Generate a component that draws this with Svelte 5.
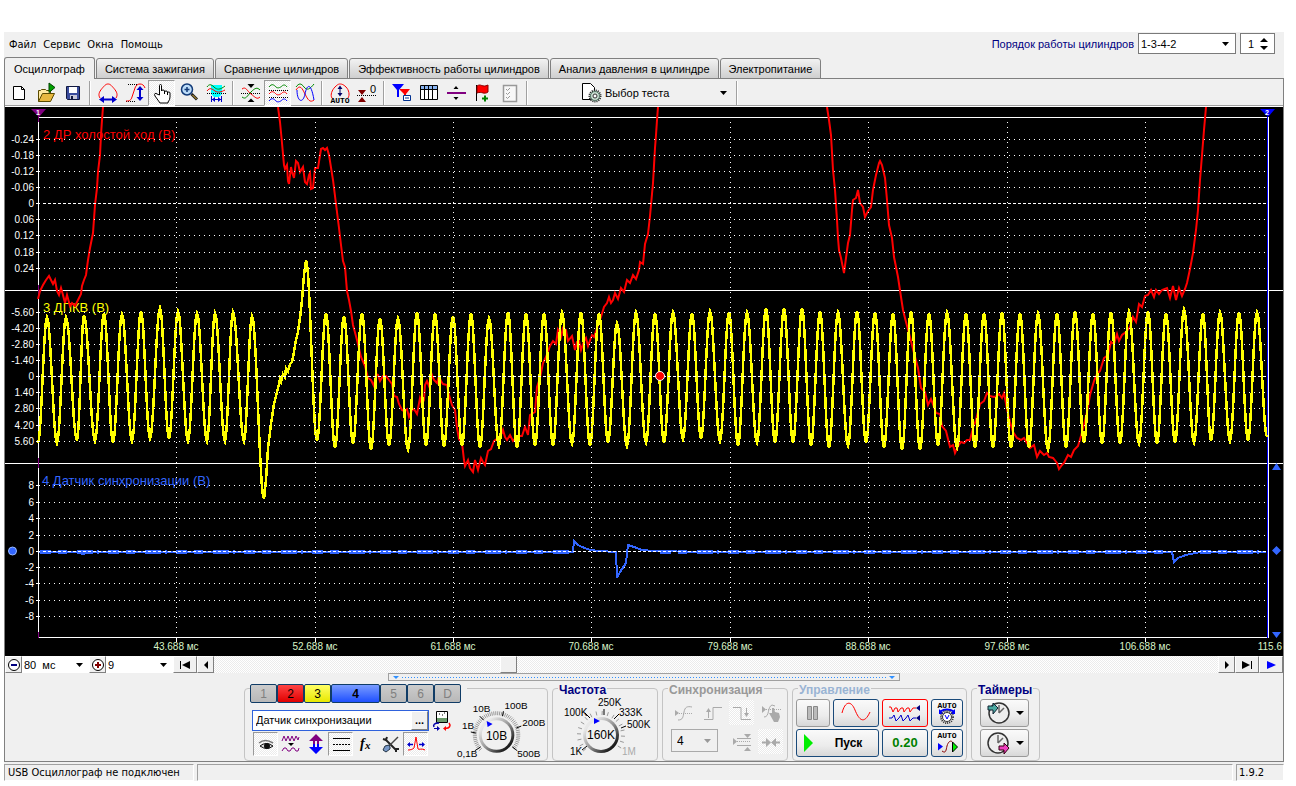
<script lang="ts">
  type Point = [number, number];

  const menu = ['Файл', 'Сервис', 'Окна', 'Помощь'];
  const tabs = [
    'Осциллограф',
    'Система зажигания',
    'Сравнение цилиндров',
    'Эффективность работы цилиндров',
    'Анализ давления в цилиндре',
    'Электропитание'
  ];
  let activeTab = $state(0);

  const toolbar = [
    ['new', 'open', 'save'],
    ['period', 'amplitude', 'hand', 'zoom', 'range'],
    ['overlay', 'stack', 'mixed'],
    ['auto', 'zero'],
    ['markers', 'table', 'divider', 'flag', 'checklist']
  ];
  const pressed = ['hand', 'stack', 'eye', 'lines', 'spread', 'fall', 'join'];

  const channels = [
    { name: '1', color: 'off' },
    { name: '2', color: 'red' },
    { name: '3', color: 'yellow' },
    { name: '4', color: 'blue' },
    { name: '5', color: 'off' },
    { name: '6', color: 'off' },
    { name: 'D', color: 'off' }
  ];
  const channelTools = ['eye', 'noise', 'updown', 'lines', 'fx', 'tools', 'spread'];

  // y positions of the grid rows, one block per channel
  const panels = [
    {
      ys: [139, 155, 171, 187, 203, 219, 235, 252, 268],
      labels: ['-0.24', '-0.18', '-0.12', '-0.06', '0', '0.06', '0.12', '0.18', '0.24']
    },
    {
      ys: [312, 328, 344, 360, 376, 392, 408, 425, 441],
      labels: ['-5.60', '-4.20', '-2.80', '-1.40', '0', '1.40', '2.80', '4.20', '5.60']
    },
    {
      ys: [485, 502, 518, 535, 551, 567, 583, 600, 616],
      labels: ['8', '6', '4', '2', '0', '-2', '-4', '-6', '-8']
    }
  ];
  const columns = [176, 315, 453, 591, 730, 868, 1007, 1145];
  const times = ['43.688', '52.688', '61.688', '70.688', '79.688', '88.688', '97.688', '106.688'];

  const throttle = [
    '38,299 40,291 43,285 46,280 49,276 51,280 53,284 55,280 57,291 59,295 61,288 63,295 65,303 67,295 70,306 72,303 75,306 78,300 81,294 82,286 84,280 86,275 88,260 90,248 93,233 95,205 97,188 98,172 100,155 101,135 102,120 103,107',
    '278,107 280,122 282,143 284,165 285,169 287,165 288,181 289,184 291,167 292,172 294,178 296,161 298,163 300,172 303,167 305,182 307,184 309,175 310,173 311,189 313,188 314,178 315,168 318,168 321,149 323,148 325,150 327,148 329,155 333,180 336,204 339,228 341,245 343,261 345,267 347,291 349,300 351,311 353,325 357,340 361,357 365,366 368,378 371,380 374,386 376,374 378,375 380,381 383,376 386,376 389,380 392,384 394,396 397,397 399,404 402,410 404,411 407,409 409,417 412,410 414,409 417,414 420,398 422,404 424,400 425,385 427,381 429,386 432,375 434,380 437,383 439,376 441,381 443,384 447,385 449,395 452,405 455,410 457,428 459,439 462,443 464,460 465,466 468,460 470,468 473,472 475,460 478,470 481,458 483,462 485,465 488,451 491,449 494,441 498,438 502,433 503,430 505,437 507,440 510,435 513,441 517,436 522,436 525,427 528,435 530,415 535,412 537,387 540,378 543,363 546,357 550,346 553,341 556,344 558,330 561,337 563,328 566,330 568,341 572,336 575,350 577,342 579,341 581,350 584,341 586,338 588,346 592,335 594,337 598,325 601,317 604,307 607,303 609,297 611,303 613,300 615,293 618,299 621,288 624,292 627,280 630,283 633,275 636,279 639,270 640,262 643,264 645,244 648,234 650,216 652,194 653,183 655,148 656,135 657,120 658,107',
    '827,107 829,120 831,135 833,170 835,190 837,220 838,238 839,250 841,258 844,273 846,258 848,243 850,235 852,210 853,200 856,198 858,190 860,203 863,207 865,217 868,211 871,207 873,190 876,175 879,163 880,161 882,165 885,178 887,200 889,225 892,238 894,257 898,277 901,297 903,310 906,322 910,337 914,353 918,368 921,388 925,392 928,405 931,399 934,407 936,413 940,414 942,426 946,431 950,447 953,445 955,453 958,446 961,442 964,443 967,440 970,440 973,428 976,420 980,404 984,401 987,393 990,396 994,397 997,396 999,394 1002,398 1004,393 1007,409 1010,422 1013,432 1017,438 1021,440 1024,438 1027,443 1030,448 1034,445 1037,457 1040,451 1044,455 1047,453 1049,457 1053,458 1057,463 1059,469 1062,465 1064,463 1068,455 1071,457 1074,450 1078,446 1081,436 1084,425 1087,412 1090,395 1094,381 1097,374 1100,371 1104,358 1108,355 1111,342 1114,344 1117,334 1119,341 1122,335 1126,332 1130,327 1133,317 1136,322 1139,304 1142,307 1145,296 1148,295 1151,290 1154,297 1156,290 1159,294 1162,290 1167,288 1170,298 1173,286 1176,300 1179,288 1182,296 1185,289 1187,283 1190,269 1193,253 1196,230 1198,210 1200,180 1202,155 1204,130 1206,107'
  ];

  // turning points of the crankshaft signal, before and after the missing tooth
  const crankStart: Point[] = [
    [38, 443], [47, 317], [57, 443], [66, 317], [77, 441], [84, 315], [95, 441], [104, 313],
    [113, 443], [122, 314], [132, 441], [141, 311], [150, 439], [160, 308], [169, 439], [178, 311],
    [188, 441], [197, 313], [207, 441], [215, 313], [225, 441], [233, 312], [244, 441], [252, 316],
    [264, 499]
  ];
  const crankGap: Point[] = [
    [264, 499], [266, 480], [268, 448], [271, 424], [274, 404], [277, 392], [279, 384], [280, 379],
    [281, 382], [283, 374], [285, 377], [286, 368], [288, 371], [290, 364], [292, 362], [294, 352],
    [296, 340], [298, 332], [300, 318], [302, 300], [304, 275], [306, 260]
  ];
  const peaks: Point[] = [
    [326, 313], [344, 316], [362, 313], [380, 318], [398, 318], [417, 312], [435, 313], [453, 316],
    [471, 313], [489, 318], [508, 312], [526, 313], [544, 313], [562, 312], [581, 312], [599, 313],
    [617, 323], [636, 312], [655, 313], [673, 312], [692, 313], [710, 311], [729, 312], [747, 312],
    [766, 308], [784, 308], [802, 308], [820, 311], [838, 312], [857, 311], [875, 312], [893, 313],
    [911, 311], [929, 313], [947, 312], [966, 313], [984, 313], [1002, 312], [1020, 313],
    [1038, 313], [1057, 313], [1075, 311], [1093, 313], [1111, 312], [1129, 311], [1148, 311],
    [1166, 313], [1184, 309], [1203, 313], [1220, 312], [1239, 312], [1257, 312]
  ];
  const troughs = [
    441, 448, 444, 450, 446, 450, 446, 447, 446, 448, 446, 448, 446, 446, 444, 446, 443, 446, 443,
    443, 439, 439, 441, 446, 443, 443, 443, 446, 448, 446, 443, 448, 450, 450, 446, 448, 448, 448,
    448, 448, 450, 448, 443, 444, 444, 444, 444, 443, 443, 441, 441, 441
  ];

  const crankEnd: Point[] = [[306, 260]];
  peaks.forEach((p, i) => {
    crankEnd.push([p[0] - 9, troughs[i]], p);
  });
  crankEnd.push([1267, 437]);

  // half a cosine between every two turning points
  const wave = (pts: Point[]) => {
    const out: string[] = [];
    for (let i = 1; i < pts.length; i++) {
      const [x0, y0] = pts[i - 1];
      const [x1, y1] = pts[i];
      for (let x = x0; x <= x1; x++) {
        const k = (1 - Math.cos((Math.PI * (x - x0)) / (x1 - x0))) / 2;
        out.push(`${x},${Math.round(y0 + (y1 - y0) * k)}`);
      }
    }
    return out.join(' ');
  };
  const crank = [wave(crankStart), crankGap.join(' '), wave(crankEnd)].join(' ');

  const sync =
    '39,552 80,552 82,554 88,553 92,552 573,552 574,541 578,545 582,547 590,550 600,551 616,552 617,578 620,572 626,563 628,545 634,547 642,550 654,551 700,552 1172,552 1174,562 1178,558 1186,555 1200,552 1266,552';

  // ticks around a knob, angles in degrees clockwise from the top
  const ticks = (cx: number, cy: number, r0: number, r1: number, step: number) => {
    let d = '';
    for (let a = -132; a <= 132; a += step) {
      const s = Math.sin((a * Math.PI) / 180);
      const c = Math.cos((a * Math.PI) / 180);
      d += `M${cx + r0 * s} ${cy - r0 * c}L${cx + r1 * s} ${cy - r1 * c}`;
    }
    return d;
  };

  const auto = (x: number, y: number) =>
    `<text x="${x}" y="${y}" font-family="Liberation Mono, monospace" font-size="8" font-weight="bold" text-anchor="middle">AUTO</text>`;

  const icons: Record<string, string> = {
    new: '<path d="M6.500 5.500h8l3 3v10h-11z" fill="#fff" stroke="#000"/><path d="M14.500 5.500v3h3" fill="none" stroke="#000"/>',
    open: '<path d="M4.500 20.500v-11h2l1-1h4l1 1h4v3" fill="#ffe9a0" stroke="#5a4a00"/><path d="M4.500 20.500l4-8h12l-4 8z" fill="#e8b840" stroke="#5a4a00"/><path d="M15 2l6 4.500-6 5z" fill="#00a000" stroke="#004000"/>',
    save: '<path d="M5.500 5.500h13v13h-12l-1-1z" fill="#3a4c9c" stroke="#101840"/><path d="M8 6h8v6H8z" fill="#fff"/><path d="M9 14h7v4H9z" fill="#c8c8d8"/><path d="M10 15h2v3h-2z" fill="#101840"/>',
    period: '<path d="M4 17c-2-3-1-6 2-9.500s4-4.500 6-4.500 3 1 6 4.500 4 6.500 2 9.500" fill="none" stroke="#f00"/><path d="M6 18.500h12" stroke="#00c" stroke-width="2"/><path d="M8 15v7l-5-3.500zM16 15v7l5-3.500z" fill="#00c"/>',
    amplitude: '<path d="M5 3.500h10M3 20.500h10" stroke="#000" stroke-dasharray="1 1"/><path d="M3 20c4 0 5-1 6-4l3-9c1-3 3-4 5-4s4 1 5 4" fill="none" stroke="#f00"/><path d="M17 7v11" stroke="#00c" stroke-width="2"/><path d="M13.500 9h7L17 5zM13.500 16h7L17 20z" fill="#00c"/>',
    hand: '<path d="M9.500 14V4.500q0-1 1-1t1 1V10q0-1 1.500-1t1.500 1v1q0-1 1.500-1t1.500 1v1q0-1 1.200-1t1.300 1v4q0 3-2 5v1h-8l-5-7q-1-2 0-2.500t2 .5z" fill="#fff" stroke="#000"/><path d="M14.500 11v2M17.500 12v2" stroke="#000"/>',
    zoom: '<circle cx="10" cy="8.500" r="5.500" fill="#bcdcf8" stroke="#123a78" stroke-width="1.500"/><path d="M7.500 8.500h5M10 6v5" stroke="#123a78" stroke-width="1.500"/><path d="M14.500 13l5.500 5.500" stroke="#222" stroke-width="3"/><path d="M15.500 14l4 4" stroke="#e8b830"/>',
    range: '<path d="M7 4h11v9l-3 3h-5l-3-3z" fill="#0ff"/><path d="M3 10c3-4 5-2 8 0s6 1 10-1" fill="none" stroke="#f00"/><path d="M3 6c2-3 4-3 7 0s6 3 11-1" fill="none" stroke="#080"/><path d="M3 12.500h19" stroke="#000" stroke-dasharray="1 1"/><path d="M7.500 15v6M17.500 15v6M8 18.500h9" stroke="#00c"/><path d="M11 16v5l-3-2.500zM14 16v5l3-2.500z" fill="#00c"/>',
    overlay: '<path d="M2 12.500h20" stroke="#000" stroke-dasharray="1 1"/><path d="M3 8c4-3 5 2 9 5s6 6 9 3" fill="none" stroke="#f00"/><path d="M3 16c4 3 5-1 9-5s6-5 9-2" fill="none" stroke="#080"/><path d="M8.500 3h7l-3.500 4zM8.500 21h7L12 17.500z"/>',
    stack: '<path d="M3 6c3-4 5-2 7 0s5 0 6-1 3-2 5 1" fill="none" stroke="#080"/><path d="M3 13c3-4 5-2 7 0s5 0 6-1 3-2 5 1" fill="none" stroke="#f00"/><path d="M3 20c3-4 5-2 7 0s5 0 6-1 3-2 5 1" fill="none" stroke="#00f"/><path d="M3 9.500h19M3 16.500h19" stroke="#000" stroke-dasharray="1 1"/>',
    mixed: '<path d="M3 6c3-4 5-4 8 0s6 2 10-3" fill="none" stroke="#080"/><path d="M3 9c4-6 6-2 9 4s5 9 9 6" fill="none" stroke="#f00"/><path d="M4 9c0 12 6 14 8 4s6-12 9 6" fill="none" stroke="#00f"/>',
    auto: '<path d="M4 17c-2-3 0-8 3-11s4-3 5-3 3 0 6 3 4 8 2 11" fill="none" stroke="#f00"/><path d="M12 6v8" stroke="#006"/><path d="M9.500 8h5L12 4.500zM9.500 12h5L12 15.500z" fill="#006"/>' + auto(12, 22),
    zero: '<path d="M3 9h8l-4 5zM3 21h8l-4-5z" fill="#800000"/><path d="M2 14.500h19" stroke="#000" stroke-dasharray="1 1"/><text x="18" y="12" font-family="Liberation Sans, sans-serif" font-size="11" text-anchor="middle">0</text>',
    markers: '<path d="M2 3h12L9 9v7H7V9z" fill="#00f"/><path d="M10 8h10l-4 5v3h-2v-3l-4-4z" fill="#f00"/><path d="M13.500 14.500h7v5h-7z" fill="#fff" stroke="#003090"/><path d="M15 17h4" stroke="#003090"/>',
    table: '<path d="M3.500 4.500h17v14h-17z" fill="#fff" stroke="#000"/><path d="M4 5h16v3H4z" fill="#8ab4f0"/><path d="M3 8.500h18M7.500 5v14M11.500 5v14M15.500 5v14" stroke="#000"/>',
    divider: '<path d="M3 12h19" stroke="#800080" stroke-width="2"/><path d="M9.500 8h5L12 5zM9.500 16h5L12 19z"/>',
    flag: '<path d="M5.500 4v16" stroke="#000"/><path d="M6 5c4-3 5 2 11-1v7c-4 3-6-1-11 1z" fill="#f00" stroke="#800"/><path d="M11 17.500h6M14 14.500v6" stroke="#008000" stroke-width="2"/>',
    checklist: '<path d="M5.500 4.500h13v16h-13z" fill="#f8f8f8" stroke="#999" stroke-width="1.500"/><path d="M8 8l1.500 1.500L12 7M8 12l1.500 1.500L12 11M8 16l1.500 1.500L12 15" fill="none" stroke="#999"/>',
    test: '<path d="M2.500 2.500h8l4 4v12h-12z" fill="#fff" stroke="#000"/><circle cx="15" cy="15" r="5.500" fill="#c8dccf" stroke="#222" stroke-width="2" stroke-dasharray="1 1"/><circle cx="15" cy="15" r="4.500" fill="#c8dccf" stroke="#576"/><circle cx="15" cy="15" r="2" fill="#fff" stroke="#333"/>',
    eye: '<path d="M5 11q6-5 14 0" fill="none" stroke="#777" stroke-width="1.500"/><path d="M6 14q6-5 13 0-6 5-13 0z" fill="#ddd" stroke="#111"/><circle cx="13" cy="14" r="3" fill="#111"/>',
    noise: '<path d="M3 9l2-5 2 5 2-5 2 5 2-5 2 5 2-5 2 4 1-3M3 19l2-3h2l2 3h2l2-3h2l2 3h2l1-3" fill="none" stroke="#800080"/><path d="M9 11h6l-3 3z"/>',
    updown: '<path d="M12 2l7 7h-4v3H9V9H5z" fill="#800080"/><path d="M9 12h6v3h4l-7 7-7-7h4z" fill="#00f"/><path d="M11 9h2v6h-2z" fill="#f0f0f0"/>',
    lines: '<path d="M4 6.500h17M4 18.500h17" stroke="#000"/><path d="M4 12.500h17" stroke="#000" stroke-dasharray="2 1"/>',
    fx: '<text x="6" y="16" font-family="Liberation Serif, serif" font-size="14" font-style="italic" font-weight="bold">f</text><text x="11" y="17" font-family="Liberation Serif, serif" font-size="11" font-style="italic" font-weight="bold">x</text>',
    tools: '<path d="M6 7l11 11" stroke="#222" stroke-width="2"/><path d="M19 5l-9 9" stroke="#444" stroke-width="1.500"/><path d="M4 7l3 1 1-3M17 20l0-3 3 0" fill="none" stroke="#222" stroke-width="2"/><path d="M10 13l-4 1-2 4 3 2 4-3 0-2z" fill="#7898c8" stroke="#234"/>',
    spread: '<path d="M4 18c3 0 5-1 6-2l2-11 2 12c1 1 4-1 7 1" fill="none" stroke="#f00"/><path d="M4 12.500h5M15 12.500h5" stroke="#00c" stroke-width="1.500"/><path d="M6 10v5l-3-2.500zM18 10v5l3-2.500z" fill="#00c"/>',
    swap: '<path d="M6.500 3.500h11v11h-11z" fill="#fff" stroke="#000"/><path d="M7 10h10v4H7z" fill="#6a9a6a"/><path d="M9 6h1M12 7h1M14 5h1" stroke="#000"/><path d="M9 15c-5 0-6 2-5 4" fill="none" stroke="#00a" stroke-width="1.500"/><path d="M4 20.500h4" stroke="#00a"/><path d="M7 18l3 2.500-3 2.500z" fill="#00a"/><path d="M15 20.500c5 0 6-3 4-5.500" fill="none" stroke="#f00" stroke-width="1.500"/><path d="M16 18l-3 2.500 3 2.500z" fill="#f00"/>',
    curve: '<path d="M3 9v6l4-3z" fill="#aaa"/><path d="M5 12.500h16" stroke="#aaa" stroke-dasharray="1 1"/><path d="M6 19c5 0 5-3 6-8s3-6 8-5" fill="none" stroke="#aaa"/>',
    rise: '<path d="M3 18.500h9v-12h9" fill="none" stroke="#aaa"/><path d="M7.500 17V8" stroke="#aaa"/><path d="M5 11h5l-2.500-4z" fill="#aaa"/>',
    fall: '<path d="M3 6.500h8v12h10" fill="none" stroke="#aaa"/><path d="M16.500 7v8" stroke="#aaa"/><path d="M14 12h5l-2.500 4z" fill="#aaa"/>',
    pick: '<path d="M3 5v7l4-3.500z" fill="#aaa"/><path d="M5 8.500h17" stroke="#aaa" stroke-dasharray="1 1"/><path d="M5 16c6 0 3-10 8-12l3 1" fill="none" stroke="#aaa"/><path d="M10 12l3 0 0-5 2 0 1 4 4 1 1 4-2 5h-4z" fill="#aaa"/>',
    level: '<path d="M3 8v7l4-3.500zM14 4h7l-3.500 4zM14 21h7L17.500 17z" fill="#aaa"/><path d="M7 8.500h14M7 15.500h14" stroke="#aaa"/><path d="M7 11.500h14" stroke="#aaa" stroke-dasharray="1 1"/>',
    join: '<path d="M3 12.500h6M15 12.500h6" stroke="#aaa" stroke-width="2"/><path d="M7 8v9l5-4.500zM17 8v9l-5-4.500z" fill="#aaa"/>',
    first: '<path d="M7 8h1v8H7zM17 8v8l-8-4z"/>',
    prev: '<path d="M14 8v8l-4-4z"/>',
    next: '<path d="M10 8v8l4-4z"/>',
    last: '<path d="M16 8h1v8h-1zM7 8v8l8-4z"/>',
    play: '<path d="M8 8v8l9-4z" fill="#00f"/>',
    minus: '<circle cx="12" cy="12" r="5.500" fill="#fff" stroke="#000"/><path d="M9 12h6" stroke="#000080" stroke-width="2"/>',
    plus: '<circle cx="12" cy="12" r="5.500" fill="#fff" stroke="#000"/><path d="M9 12h6M12 9v6" stroke="#800000" stroke-width="2"/>',
    pause: '<path d="M6.500 5.500h4v13h-4zM12.500 5.500h4v13h-4z" fill="#bbb" stroke="#888"/>',
    sine: '<path d="M-2 12C1 0 7-1 11 9s9 15 15 2" fill="none" stroke="#f00"/>',
    waves: '<path d="M-4 6h2l2 5 2-4h2l1 4 3-4h2l1 4 3-4h2l1 4 3-4h3" fill="none" stroke="#f00"/><path d="M-4 17h3l2-3 2 6 3-3 2-3 2 6 3-3 2-3 2 6 3-3h3" fill="none" stroke="#00c"/><path d="M27 4v6l-4-3zM27 14v6l-4-3z" fill="#000080"/>',
    autoVolt: auto(12, 7) + '<path d="M5 10.500q7-4 14 0" fill="none" stroke="#00f" stroke-width="2"/><path d="M4 8v5h5zM20 8v5h-5z" fill="#00f"/><circle cx="12" cy="16" r="6" fill="none" stroke="#333" stroke-width="2" stroke-dasharray="1 1"/><circle cx="12" cy="16" r="4.500" fill="#fff" stroke="#333"/><path d="M10 14l2 4 2-4" fill="none" stroke="#00f"/>',
    autoRun: auto(12, 7) + '<path d="M3 12l5 3.500-5 4z" fill="#00f"/><path d="M7 20c4 3 4-1 5-5s4-7 6-3" fill="none" stroke="#800"/><path d="M17.500 11l5 5-5 5z" fill="#0e0" stroke="#000"/>',
    clockIn: '<circle cx="13" cy="12" r="10" fill="#eee" stroke="#333" stroke-width="1.500"/><path d="M13 12V4M13 12l5-5" stroke="#666" stroke-width="1.500"/><path d="M2 5h5V2l5 5-5 6v-4H2z" fill="#4aa8a0" stroke="#123"/>',
    clockOut: '<circle cx="12" cy="12" r="10" fill="#eee" stroke="#333" stroke-width="1.500"/><path d="M12 12V4M12 12l5-5" stroke="#666" stroke-width="1.500"/><path d="M13 15h5v-3l5 5-5 6v-4h-5z" fill="#f040c0" stroke="#301"/>',
    run: '<path d="M7 3v18l9-9z" fill="#0e0"/>'
  };

  let channelName = $state('Датчик синхронизации');
  let cylinder = $state(1);
</script>

{#snippet icon(name: string)}
  <svg class="icon" width="24" height="24" viewBox="0 0 24 24" aria-hidden="true">
    {@html icons[name]}
  </svg>
{/snippet}

{#snippet tool(name: string)}
  <button class="tool" class:pressed={pressed.includes(name)} aria-label={name}>
    {@render icon(name)}
  </button>
{/snippet}

<main>
  <header>
    <nav>
      {#each menu as item}
        <button class="menu-item">{item}</button>
      {/each}
    </nav>
    <div class="order">
      <label for="order">Порядок работы цилиндров</label>
      <select id="order" class="boxed">
        <option>1-3-4-2</option>
      </select>
      <div class="spin">
        <input aria-label="Цилиндр" bind:value={cylinder} />
        <div class="spin-buttons">
          <button class="up" aria-label="Больше" onclick={() => (cylinder += 1)}></button>
          <button class="down" aria-label="Меньше" onclick={() => (cylinder -= 1)}></button>
        </div>
      </div>
    </div>
  </header>

  <div class="tabs" role="tablist">
    {#each tabs as tab, i}
      <button
        class="tab"
        class:active={activeTab === i}
        role="tab"
        aria-selected={activeTab === i}
        onclick={() => (activeTab = i)}>{tab}</button
      >
    {/each}
  </div>

  <div class="frame">
    <div class="toolbar">
      {#each toolbar as group}
        {#each group as name}
          {@render tool(name)}
        {/each}
        <span class="sep"></span>
      {/each}
      <div class="test">
        {@render icon('test')}
        <select aria-label="Тест">
          <option>Выбор теста</option>
        </select>
      </div>
      <span class="sep"></span>
    </div>

    <svg class="scope" viewBox="5 107 1278 549" role="img" aria-label="Осциллограмма">
      <g class="crisp">
        <path d="M39 117.500H1268M5 290.500H1283M5 463.500H1283M39 637.500H1268" stroke="#fff" />
        <path d="M38.500 117V638M1268.500 117V638" stroke="#fff" />
        <path d="M1267.500 117V638" stroke="#00f" />
        <path d="M38.500 114V122M38.500 285V296M38.500 458V468M38.500 632V638" stroke="#800080" />
      </g>

      <g class="name">
        <text x="43" y="139" fill="#f00">2 ДР холостой ход (В)</text>
        <text x="43" y="312" fill="#ff0">3 ДПКВ (В)</text>
        <text x="42" y="485" fill="#36f">4 Датчик синхронизации (В)</text>
      </g>

      {#each throttle as points}
        <polyline {points} stroke="#f00" stroke-width="2" />
      {/each}
      <polyline class="crisp" points={crank} stroke="#ff0" stroke-width="2.500" />
      <path
        class="crisp"
        d="M40 551.500H573M660 551.500H1172M1200 551.500H1266"
        stroke="#36f"
        stroke-width="4"
        stroke-dasharray="11 7 9 10 16 4 2 9"
      />
      <polyline class="crisp" points={sync} stroke="#36f" stroke-width="2" />

      <g class="crisp" stroke="#fff">
        {#each columns as x}
          <path d="M{x}.500 122V638" stroke-dasharray="1 4" />
          <path d="M{x}.500 638v4" />
        {/each}
        {#each panels as panel}
          {#each panel.ys as y, i}
            <path d="M{i === 4 ? 43 : 44} {y}.500H1266" stroke-dasharray={i === 4 ? '3 2' : '1 4'} />
            <path d="M36 {y}.500h4" />
          {/each}
        {/each}
      </g>

      <g class="scale">
        {#each panels as panel}
          {#each panel.ys as y, i}
            <text x="34" y={y + 4} text-anchor="end">{panel.labels[i]}</text>
          {/each}
        {/each}
      </g>
      <g class="time">
        {#each columns as x, i}
          <text {x} y="650" text-anchor="middle">{times[i]} мс</text>
        {/each}
        <text x="1282" y="650" text-anchor="end">115.6</text>
      </g>

      <path d="M31 109h15l-7 8z" fill="#800080" />
      <path d="M1260 109h15l-7 8z" fill="#00f" />
      <text class="mark" x="38" y="115">1</text>
      <text class="mark" x="1267" y="115">2</text>
      <path d="M1272 470h9l-4.500-7zM1272 632h9l-4.500 6zM1276.500 546l4.500 4.500-4.500 4.500-4.500-4.500z" fill="#36f" />
      <circle cx="12.500" cy="551" r="4" fill="#36f" stroke="#9bf" />
      <circle cx="660" cy="376" r="4.500" fill="#f00" stroke="#fff" />
    </svg>

    <div class="scroll">
      <button class="raised small" aria-label="Уменьшить">{@render icon('minus')}</button>
      <select class="span" aria-label="Длительность">
        <option>80 &nbsp;мс</option>
      </select>
      <button class="raised small" aria-label="Увеличить">{@render icon('plus')}</button>
      <select class="span" aria-label="Масштаб">
        <option>9</option>
      </select>
      <button class="raised" aria-label="В начало">{@render icon('first')}</button>
      <button class="raised small" aria-label="Назад">{@render icon('prev')}</button>
      <div class="track">
        <button class="raised small" aria-label="Позиция"></button>
      </div>
      <button class="raised small" aria-label="Вперёд">{@render icon('next')}</button>
      <button class="raised" aria-label="В конец">{@render icon('last')}</button>
      <button class="raised" aria-label="Воспроизвести">{@render icon('play')}</button>
    </div>

    <div class="splitter"><i class="nib"></i><span></span><i class="nib"></i></div>

    <div class="controls">
      <section class="group channel">
        <div class="channels">
          {#each channels as channel}
            <button class="ch {channel.color}">{channel.name}</button>
          {/each}
        </div>
        <div class="channel-body">
          <div class="settings">
            <div class="row">
              <div class="field">
                <input aria-label="Название канала" bind:value={channelName} />
                <button class="raised more">...</button>
              </div>
              {@render tool('swap')}
            </div>
            <div class="row tools">
              {#each channelTools as name}
                {@render tool(name)}
              {/each}
            </div>
          </div>
          <svg class="knob" width="94" height="62" viewBox="455 700 94 62">
            <path d={ticks(498, 734, 20, 24, 5)} stroke="#999" />
            <path d="M481 715l4 4M505 710l-1 5M518 727l5-2M472 731l5 1M476 750l6-4M514 746l5 4" stroke="#000" />
            <circle cx="498" cy="734" r="18" fill="url(#metal)" />
            <circle cx="498" cy="734" r="15" fill="#f0f0f0" />
            <path d="M488 720l6 3-5 3z" fill="#00f" />
            <text class="value" x="498" y="739">10В</text>
            <text x="474" y="711">10В</text>
            <text x="506" y="708">100В</text>
            <text x="463" y="728">1В</text>
            <text x="524" y="725">200В</text>
            <text x="458" y="756">0,1В</text>
            <text x="519" y="756">500В</text>
            <defs>
              <linearGradient id="metal" x1="0" y1="0" x2="1" y2="1">
                <stop offset="0.200" stop-color="#e8e8e8" />
                <stop offset="0.500" stop-color="#999" />
                <stop offset="0.900" stop-color="#000" />
              </linearGradient>
            </defs>
          </svg>
        </div>
      </section>

      <section class="group frequency">
        <h2>Частота</h2>
        <svg class="knob" width="101" height="64" viewBox="554 696 101 64">
          <path d={ticks(602, 735, 20, 24, 15)} stroke="#999" />
          <path d="M586 713l5 5M605 709v6M620 714l-5 5M627 726l-5 2M583 750l5-4" stroke="#000" />
          <circle cx="602" cy="735" r="18" fill="url(#metal)" />
          <circle cx="602" cy="735" r="15" fill="#f0f0f0" />
          <path d="M595 718l6 3-6 3z" fill="#00f" />
          <text class="value" x="602" y="739">160K</text>
          <text x="565" y="716">100K</text>
          <text x="599" y="706">250K</text>
          <text x="620" y="716">333K</text>
          <text x="628" y="728">500K</text>
          <text x="571" y="755">1K</text>
          <text x="623" y="755" fill="#aaa">1M</text>
        </svg>
      </section>

      <section class="group trigger">
        <h2 class="dim">Синхронизация</h2>
        <div class="trigger-grid">
          {@render tool('curve')}
          {@render tool('rise')}
          {@render tool('fall')}
          {@render tool('pick')}
          <select class="source" aria-label="Канал синхронизации">
            <option>4</option>
          </select>
          {@render tool('level')}
          {@render tool('join')}
        </div>
      </section>

      <section class="group">
        <h2 class="pale">Управление</h2>
        <div class="run-grid">
          <button class="push gray" aria-label="Пауза">{@render icon('pause')}</button>
          <button class="push" aria-label="Синусоида">{@render icon('sine')}</button>
          <button class="push record" aria-label="Запись">{@render icon('waves')}</button>
          <button class="push" aria-label="Авто диапазон">{@render icon('autoVolt')}</button>
          <button class="push start">{@render icon('run')}<span>Пуск</span></button>
          <button class="push speed">0.20</button>
          <button class="push" aria-label="Авто запуск">{@render icon('autoRun')}</button>
        </div>
      </section>

      <section class="group timers">
        <h2>Таймеры</h2>
        <button class="push gray" aria-label="Таймер запуска">
          {@render icon('clockIn')}<i class="arrow"></i>
        </button>
        <button class="push gray" aria-label="Таймер остановки">
          {@render icon('clockOut')}<i class="arrow"></i>
        </button>
      </section>
    </div>
  </div>

  <footer>
    <span class="state">USB Осциллограф не подключен</span>
    <span class="message"></span>
    <span class="version">1.9.2</span>
  </footer>
</main>

<style>
  :global(body) {
    margin: 0;
    background: #fff;
  }
  main {
    --face: #f0f0f0;
    --dither: repeating-conic-gradient(#fff 0 25%, #ebebeb 0 50%) 0 0 / 2px 2px;
    margin: 32px 12px 0 4px;
    background: var(--face);
    font: 11px/14px 'Liberation Sans', Arial, sans-serif;
    color: #000;
  }
  main * {
    box-sizing: border-box;
  }
  button,
  input,
  select {
    margin: 0;
    padding: 0;
    border: 0;
    border-radius: 0;
    background: none;
    font: inherit;
    color: inherit;
  }
  select {
    appearance: none;
    background: url("data:image/svg+xml,%3Csvg xmlns='http://www.w3.org/2000/svg' viewBox='0 0 7 4'%3E%3Cpath d='M0 0h7L3.500 4z'/%3E%3C/svg%3E")
      no-repeat right 6px center / 7px 4px;
  }
  .icon {
    display: block;
    flex: none;
    overflow: visible;
  }

  header {
    display: flex;
    justify-content: space-between;
    height: 25px;
  }
  nav {
    display: flex;
    align-items: center;
    gap: 7px;
    padding-left: 5px;
    font: 11px/14px 'DejaVu Sans Condensed', Tahoma, sans-serif;
  }
  .order {
    display: flex;
    gap: 4px;
    align-items: flex-start;
    padding: 1px 9px 0 0;
  }
  .order label {
    line-height: 22px;
    color: #000080;
  }
  .boxed,
  .spin {
    height: 21px;
    border: 1px solid #7a7a7a;
    background-color: #fff;
  }
  .boxed {
    width: 98px;
    padding-left: 2px;
  }
  .spin {
    display: flex;
    align-items: center;
    width: 35px;
    padding-left: 7px;
  }
  .spin input {
    width: 12px;
  }
  .spin-buttons {
    display: grid;
    gap: 4px;
  }
  .up,
  .down {
    border: 4px solid transparent;
    border-top-width: 0;
    border-bottom: 4px solid #000;
  }
  .down {
    border-top: 4px solid #000;
    border-bottom-width: 0;
  }

  .tabs {
    display: flex;
    align-items: flex-end;
    gap: 1px;
    height: 22px;
    margin-bottom: -1px;
  }
  .tab {
    height: 21px;
    padding: 0 8px;
    border: 1px solid #808080;
    border-radius: 3px 3px 0 0;
    background: linear-gradient(#f2f2f2, #e0e0e0 50%, #cfcfcf);
  }
  .tab.active {
    height: 22px;
    padding: 0 9px;
    border-bottom: 0;
    background: var(--face);
  }

  .frame {
    border: 1px solid #808080;
  }
  .toolbar {
    display: flex;
    align-items: center;
    height: 28px;
    border-bottom: 1px solid #fff;
    box-shadow: inset 0 -1px #a0a0a0;
  }
  .tool,
  .raised {
    display: flex;
    align-items: center;
    justify-content: center;
    overflow: hidden;
  }
  .tool {
    width: 27px;
    height: 26px;
  }
  .pressed {
    border: 1px solid #fff;
    border-top-color: #999;
    border-left-color: #999;
    background: var(--dither);
  }
  .sep {
    width: 2px;
    height: 24px;
    margin: 0 3px;
    border-left: 1px solid #a0a0a0;
    border-right: 1px solid #fff;
  }
  .test {
    display: flex;
    align-items: center;
    width: 153px;
    margin-left: 49px;
  }
  .test select {
    flex: 1;
    height: 22px;
    padding-left: 1px;
  }

  .scope {
    display: block;
    width: 100%;
    background: #000;
    font-family: 'Liberation Sans', Arial, sans-serif;
  }
  .scope polyline {
    fill: none;
  }
  .crisp {
    shape-rendering: crispEdges;
  }
  .name {
    font-size: 13px;
  }
  .scale {
    font-size: 10px;
    fill: #fff;
  }
  .time {
    font-size: 10px;
    fill: #d8f4c8;
  }
  .mark {
    font-size: 7px;
    font-weight: bold;
    fill: #fff;
    text-anchor: middle;
  }

  .scroll {
    display: flex;
    height: 17px;
    background: #fff;
  }
  .raised {
    width: 24px;
    border: 1px solid #fff;
    border-right-color: #808080;
    border-bottom-color: #808080;
    background: var(--face);
  }
  .small {
    width: 17px;
  }
  .span {
    width: 67px;
    padding-left: 2px;
  }
  .track {
    flex: 1;
    display: flex;
    padding-left: 22.4%;
    background: var(--dither);
  }

  .splitter {
    display: flex;
    align-items: center;
    width: 40%;
    height: 8px;
    margin: 0 auto;
    padding: 0 4px;
    border: 1px solid #a0a0a0;
  }
  .splitter span {
    flex: 1;
    height: 1px;
    margin: 0 3px;
    background: repeating-linear-gradient(90deg, #3090ff 0 1px, transparent 1px 3px);
  }
  .nib {
    border: 3px solid transparent;
    border-top-color: #3090ff;
    border-bottom: 0;
  }

  .controls {
    display: flex;
    justify-content: center;
    gap: 4px;
    padding: 7px 4px 0 0;
  }
  .group {
    height: 73px;
    border: 1px solid #c4c4c4;
    border-radius: 4px;
  }
  h2 {
    width: fit-content;
    height: 14px;
    margin: -7px 0 0 5px;
    padding: 0 1px;
    background: var(--face);
    font-size: 12px;
    line-height: 16px;
    color: #000080;
  }
  .dim {
    color: #999;
  }
  .pale {
    color: #9ab4d4;
  }
  .channel {
    width: 304px;
  }
  .channels {
    display: flex;
    width: 217px;
    margin: -5px 0 0 5px;
    background: var(--face);
  }
  .ch {
    width: 27px;
    height: 19px;
    border: 1px solid #103c66;
    border-radius: 2px;
    font-size: 12px;
  }
  .off {
    background: linear-gradient(#ccc, #b8b8b8);
    color: #808080;
  }
  .red {
    background: linear-gradient(#f44, #e00000);
  }
  .yellow {
    background: linear-gradient(#ff6, #e8e800);
  }
  .blue {
    width: 49px;
    background: linear-gradient(#7a9cff, #1f50ff);
    font-weight: bold;
  }
  .channel-body {
    display: flex;
    justify-content: space-between;
    margin-top: -2px;
  }
  .settings {
    padding: 7px 0 0 7px;
  }
  .row {
    display: flex;
    align-items: center;
  }
  .row .tool {
    width: 25px;
    height: 24px;
  }
  .tools {
    padding-left: 1px;
  }
  .field {
    display: flex;
    width: 177px;
    height: 21px;
    border: 1px solid #2f62dc;
    background: #fff;
  }
  .field input {
    flex: 1;
    min-width: 0;
    padding-left: 3px;
  }
  .more {
    width: 17px;
    line-height: 8px;
    font-weight: bold;
  }
  .knob {
    display: block;
    font-size: 10px;
  }
  .value {
    font-size: 12px;
    text-anchor: middle;
  }
  .frequency {
    width: 106px;
  }
  .trigger {
    width: 126px;
  }
  .trigger-grid {
    display: grid;
    grid-template-columns: repeat(4, 25px);
    gap: 4px;
    padding: 4px 5px 0 8px;
  }
  .trigger-grid .tool {
    width: 25px;
    height: 25px;
  }
  .trigger-grid .pressed {
    border-color: transparent;
  }
  .source {
    grid-column: span 2;
    width: 47px;
    height: 23px;
    padding-left: 5px;
    border: 1px solid #aaa;
    background-image: url("data:image/svg+xml,%3Csvg xmlns='http://www.w3.org/2000/svg' viewBox='0 0 7 4'%3E%3Cpath fill='%23999' d='M0 0h7L3.500 4z'/%3E%3C/svg%3E");
    font-size: 12px;
  }
  .run-grid {
    display: grid;
    grid-template-columns: 34px 46px 46px 32px;
    gap: 2px 3px;
    padding: 3px 3px 0;
  }
  .push {
    display: flex;
    align-items: center;
    justify-content: center;
    height: 28px;
    overflow: hidden;
    border: 1px solid #1a4a7a;
    border-radius: 3px;
    background: linear-gradient(#fafafa, #ececec 60%, #d8d8d8);
  }
  .gray {
    border-color: #999;
  }
  .record {
    border-color: #f00;
  }
  .start {
    grid-column: span 2;
    gap: 14px;
    padding-right: 16px;
    font-size: 12px;
    font-weight: bold;
  }
  .speed {
    color: #008000;
    font-size: 13px;
    font-weight: bold;
  }
  .timers {
    width: 69px;
  }
  .timers .push {
    gap: 6px;
    width: 49px;
    margin: 3px 0 0 8px;
  }
  .timers .push + .push {
    margin-top: 2px;
  }
  .arrow {
    border: 4px solid transparent;
    border-top-color: #000;
    border-bottom: 0;
  }

  footer {
    display: flex;
    gap: 3px;
    height: 19px;
    padding-top: 2px;
    font: 11px/16px 'DejaVu Sans Condensed', Tahoma, sans-serif;
  }
  footer span {
    border: 1px solid #fff;
    border-top-color: #a0a0a0;
    border-left-color: #a0a0a0;
  }
  .state {
    width: 190px;
    padding-left: 3px;
  }
  .message {
    flex: 1;
  }
  .version {
    width: 48px;
    padding-left: 2px;
  }
</style>
